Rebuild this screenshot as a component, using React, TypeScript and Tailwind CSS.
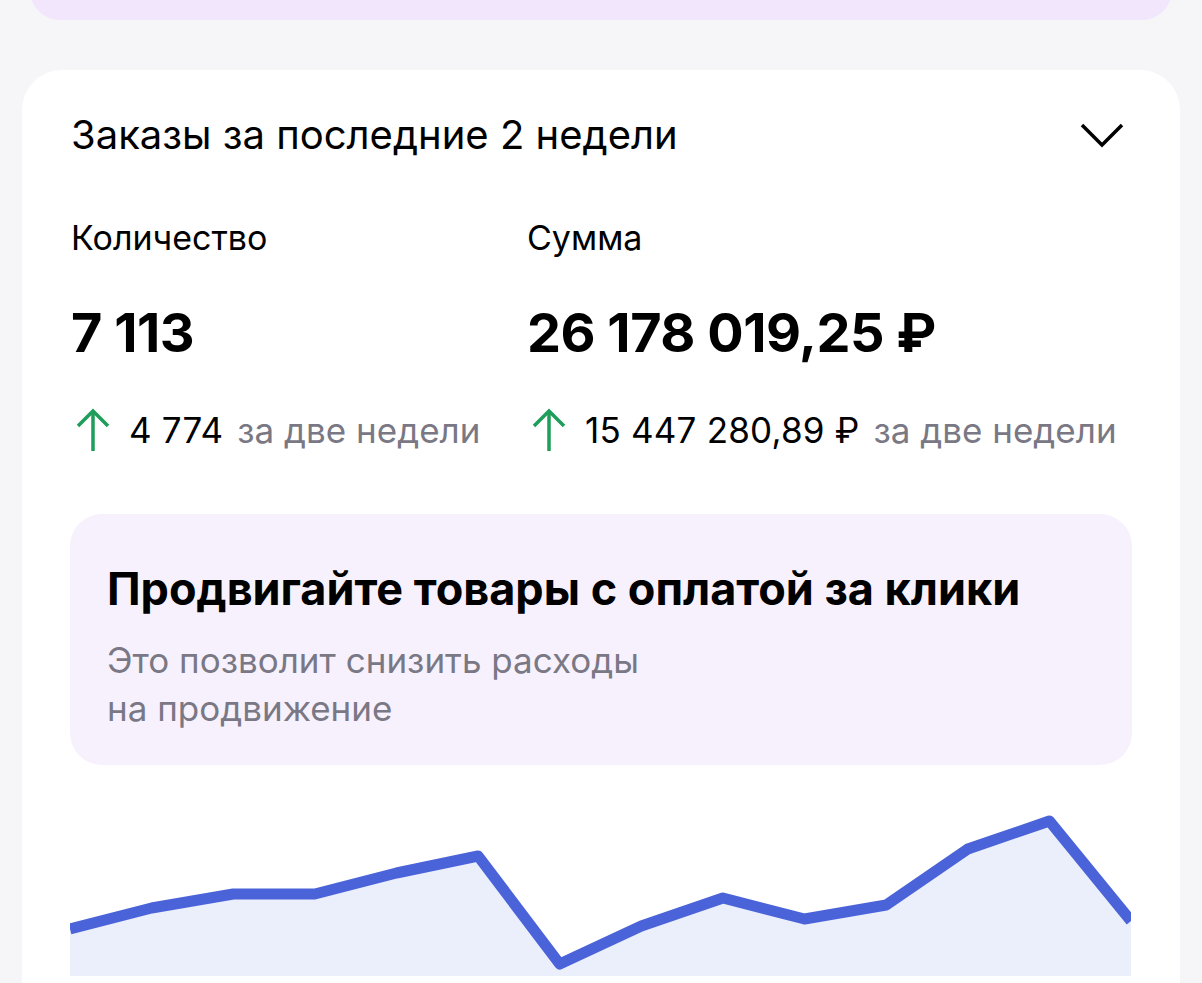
const points = [928, 907, 893, 893, 872, 855, 963, 925, 897, 918, 904, 848, 820, 920];

function OrdersChart() {
  const w = 1061;
  const h = 211;
  const step = w / (points.length - 1);
  // y values are page coordinates; the chart starts at 764
  const coords = points.map((y, i) => [i * step, y - 764] as const);
  const line = coords.map(([x, y], i) => `${i === 0 ? 'M' : 'L'}${x.toFixed(1)} ${y}`).join(' ');
  const area = `${line} L${w} ${h} L0 ${h} Z`;

  return (
    <svg width={w} height={h} viewBox={`0 0 ${w} ${h}`} className="block overflow-hidden">
      <path d={area} fill="#ebeefb" />
      <path d={line} fill="none" stroke="#4b63d9" strokeWidth={11} strokeLinejoin="round" />
    </svg>
  );
}

function UpArrow() {
  return (
    <svg width="34" height="44" viewBox="0 0 34 44" className="shrink-0" fill="none" stroke="#1f9d5a" strokeWidth={3.5}>
      <path d="M17 3 V43" />
      <path d="M2 18 L17 3 L32 18" strokeLinejoin="miter" />
    </svg>
  );
}

function Change({ value }: { value: string }) {
  return (
    <div className="flex items-center h-[44px] text-[35px] leading-[44px]">
      <div className="ml-[5px] mr-[19px] flex">
        <UpArrow />
      </div>
      <span className="text-black tracking-[0.2px]">{value}</span>
      <span className="text-[#797884] ml-[14px]">за две недели</span>
    </div>
  );
}

export default function App() {
  return (
    <div className="h-[983px] overflow-hidden bg-[#f6f6f8] font-['Inter',sans-serif]">
      <div className="h-[60px] -mt-[40px] mx-[30px] rounded-[32px] bg-[#f1e6fc]" />

      <div className="mt-[50px] mx-[22px] rounded-[40px] bg-white px-[48px] pt-[41px] h-[1000px]">
        <div className="flex items-center justify-between h-[48px]">
          <h2 className="text-[40px] leading-[48px] text-black pl-[1px]">Заказы за последние 2 недели</h2>
          <svg width="46" height="28" viewBox="0 0 46 28" fill="none" stroke="black" strokeWidth={3.5} className="mr-[7px]">
            <path d="M3 4 L23 24 L43 4" />
          </svg>
        </div>

        <div className="grid grid-cols-[456px_1fr] mt-[59px] pl-[1px]">
          <div>
            <div className="text-[34px] leading-[40px] text-black">Количество</div>
            <div className="mt-[44px] text-[54px] leading-[62px] font-bold text-black tracking-[-0.5px]">7 113</div>
            <div className="mt-[44px]">
              <Change value="4 774" />
            </div>
          </div>
          <div>
            <div className="text-[34px] leading-[40px] text-black">Сумма</div>
            <div className="mt-[44px] text-[54px] leading-[62px] font-bold text-black tracking-[-0.5px]">26 178 019,25 ₽</div>
            <div className="mt-[44px]">
              <Change value="15 447 280,89 ₽" />
            </div>
          </div>
        </div>

        <div className="mt-[62px] rounded-[32px] bg-[#f7f1fd] px-[37px] pt-[49px] pb-[33px]">
          <h3 className="text-[45px] leading-[52px] font-bold text-black">Продвигайте товары с оплатой за клики</h3>
          <p className="mt-[21px] text-[35px] leading-[48px] text-[#797884]">
            Это позволит снизить расходы
            <br />
            на продвижение
          </p>
        </div>

        <OrdersChart />
      </div>
    </div>
  );
}
